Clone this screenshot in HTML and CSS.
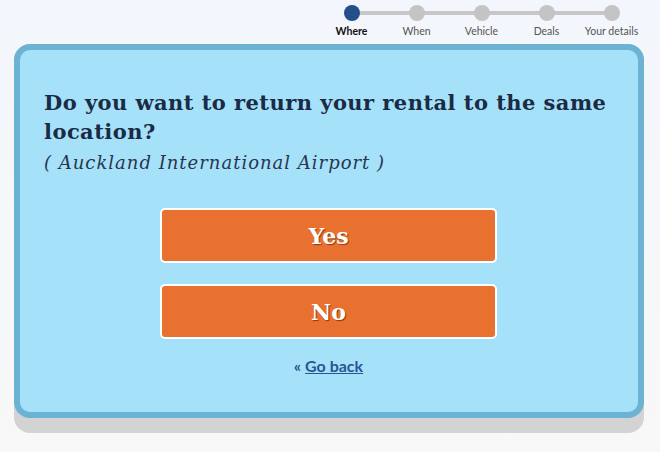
FILE: index.html
```html
<!DOCTYPE html>
<html>
<head>
<meta charset="utf-8">
<link rel="stylesheet" href="styles.css">
</head>
<body>
<div class="page">
  <div class="stepper">
    <div class="track"></div>
    <div class="step active"><span class="dot"></span><span class="label">Where</span></div>
    <div class="step"><span class="dot"></span><span class="label">When</span></div>
    <div class="step"><span class="dot"></span><span class="label">Vehicle</span></div>
    <div class="step"><span class="dot"></span><span class="label">Deals</span></div>
    <div class="step"><span class="dot"></span><span class="label">Your details</span></div>
  </div>
  <div class="card-wrap">
    <div class="card">
      <h1 class="question">Do you want to return your rental to the same location?</h1>
      <p class="place">( Auckland International Airport )</p>
      <div class="actions">
        <button class="choice">Yes</button>
        <button class="choice">No</button>
        <div class="back">« <a href="#">Go back</a></div>
      </div>
    </div>
  </div>
</div>
</body>
</html>
```
FILE: styles.css
```css
html, body { margin: 0; padding: 0; }
body {
  width: 660px;
  height: 452px;
  background: linear-gradient(#f3f6fc, #f8f8f8);
  font-family: "DejaVu Serif", serif;
  overflow: hidden;
}
.page { padding: 5px 16px 0 14px; }
.stepper {
  position: relative;
  display: flex;
  width: 325px;
  margin-left: auto;
  margin-right: 0;
  height: 39px;
}
.track {
  position: absolute;
  top: 6px;
  left: 32px;
  width: 260px;
  height: 4px;
  background: #c7c7c7;
}
.step {
  position: relative;
  width: 65px;
  display: flex;
  flex-direction: column;
  align-items: center;
}
.dot {
  width: 16px;
  height: 16px;
  border-radius: 50%;
  background: #c4c4c4;
}
.step.active .dot { background: #244f8b; }
.label {
  margin-top: 4px;
  font-family: Lato, sans-serif;
  font-size: 10.5px;
  color: #555;
  white-space: nowrap;
}
.step.active .label { color: #111; font-weight: bold; }
.card-wrap {
  background: #d3d3d3;
  border-radius: 16px;
  padding-bottom: 15px;
}
.card {
  background: #a5e2fa;
  border: 6px solid #6cb3d3;
  border-radius: 16px;
  padding: 38px 25px 37px 24px;
}
.question {
  margin: 0;
  font-size: 21px;
  line-height: 29px;
  font-weight: bold;
  color: #1b2a45;
  letter-spacing: 0.45px;
}
.place {
  margin: 6px 0 0 0;
  font-size: 18px;
  font-style: italic;
  color: #2a3550;
  letter-spacing: 1px;
}
.actions {
  display: flex;
  flex-direction: column;
  align-items: center;
  gap: 21px;
  margin-top: 35px;
}
.choice {
  width: 337px;
  height: 55px;
  background: #e9712f;
  border: 2px solid #fff;
  border-radius: 5px;
  color: #fff;
  font-family: "DejaVu Serif", serif;
  font-size: 22px;
  font-weight: bold;
  text-shadow: 1px 1px 1px #8a3a12;
}
.back {
  margin-top: -4px;
  font-family: Lato, sans-serif;
  font-weight: bold;
  font-size: 16px;
  color: #2a5592;
}
.back a { color: #2a5592; }
```
